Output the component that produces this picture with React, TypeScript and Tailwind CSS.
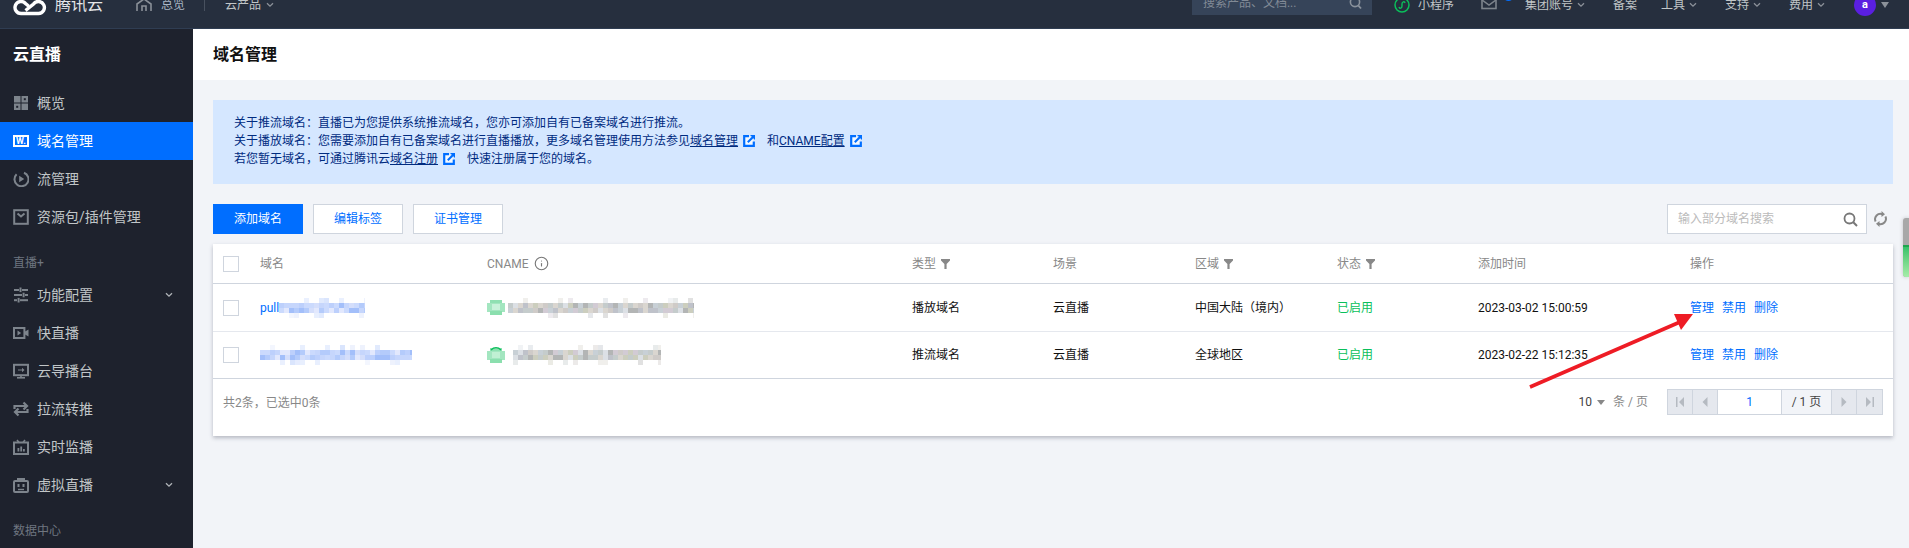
import React from "react";
import { Info } from "lucide-react";

const FONT = "font-['Roboto','Noto_Sans_CJK_SC',sans-serif]";

function rng(seed: number) {
  let s = seed;
  return () => {
    s = (s * 16807) % 2147483647;
    return s / 2147483647;
  };
}

function Mosaic({ w, h, palette, seed, cell = 5 }: { w: number; h: number; palette: string[]; seed: number; cell?: number }) {
  const r = rng(seed);
  const rows = Math.ceil(h / cell);
  const cols = Math.ceil(w / cell);
  const cells: React.ReactNode[] = [];
  for (let y = 0; y < rows; y++) {
    for (let x = 0; x < cols; x++) {
      const edge = y === 0 || y === rows - 1;
      const v = r();
      if (edge && v < 0.78) continue;
      cells.push(
        <rect key={`${x}-${y}`} x={x * cell} y={y * cell} width={cell} height={cell} fill={palette[Math.floor(r() * palette.length)]} opacity={edge ? 0.4 : 1} />
      );
    }
  }
  return (
    <svg width={w} height={h} shapeRendering="crispEdges" className="block shrink-0">
      {cells}
    </svg>
  );
}

const BLUE = ["#c6d6fc", "#bdd0fc", "#d4defb", "#b4cbfb", "#cbdafd", "#e2e8fd", "#a3bffa"];
const GREY = ["#cfcbc8", "#c8d0d6", "#bfc2ca", "#dad6d0", "#c5cccc", "#d2cbd4", "#b3b5b5", "#dce0e5", "#cccebe"];

function GreenDot({ top }: { top?: boolean }) {
  return (
    <svg width="18" height="17" viewBox="0 0 18 17" shapeRendering="crispEdges" className="shrink-0 block">
      <rect x="3" y="1" width="12" height="15" fill="#8fe0b2" />
      <rect x="0" y="4" width="18" height="9" fill="#a3e6c0" />
      <rect x="5" y="5" width="8" height="6" fill={top ? "#c0f0d3" : "#c8f2da"} />
      <rect x="3" y="12" width="12" height="4" fill="#8bdfae" />
      {top && <path d="M4 3 C7 0 11 0 14 3" fill="none" stroke="#0abf5b" strokeWidth="1.4" shapeRendering="auto" />}
    </svg>
  );
}

const ic = "#7d848c";

function Chev({ c = "#8b9199" }: { c?: string }) {
  return (
    <svg width="8" height="6" viewBox="0 0 8 6" className="shrink-0">
      <path d="M1 1.2 L4 4.2 L7 1.2" fill="none" stroke={c} strokeWidth="1.3" />
    </svg>
  );
}

const icons: Record<string, React.ReactNode> = {
  overview: (
    <g fill={ic}>
      <rect x="1" y="1" width="6.5" height="6.5" />
      <rect x="8.5" y="1" width="6.5" height="6.5" />
      <rect x="1" y="8.5" width="6.5" height="6.5" />
      <rect x="8.5" y="8.5" width="6.5" height="6.5" />
      <rect x="10.8" y="3.2" width="2" height="2" fill="#1e222d" />
      <rect x="3.2" y="10.8" width="2" height="2" fill="#1e222d" />
    </g>
  ),
  stream: (
    <g fill="none" stroke={ic} strokeWidth="2">
      <path d="M11 1.7 A7 7 0 1 1 3.6 3.2" />
      <path d="M6.2 4.8 L11.2 8 L6.2 11.2 Z" fill={ic} stroke="none" />
    </g>
  ),
  pack: (
    <g fill="none" stroke={ic} strokeWidth="2">
      <rect x="1.2" y="1.2" width="13.6" height="13.6" />
      <path d="M4.5 4.5 L8 7.5 L11.5 4.5" />
    </g>
  ),
  config: (
    <g fill={ic}>
      <rect x="1" y="2" width="5" height="2" />
      <rect x="9" y="2" width="6" height="2" />
      <rect x="6.5" y="0.5" width="2" height="4.6" />
      <rect x="1" y="7" width="8" height="2" />
      <rect x="12" y="7" width="3" height="2" />
      <rect x="9.6" y="5.7" width="2" height="4.6" />
      <rect x="1" y="12.2" width="3" height="2" />
      <rect x="7" y="12.2" width="8" height="2" />
      <rect x="4.6" y="10.9" width="2" height="4.6" />
    </g>
  ),
  video: (
    <g>
      <rect x="1" y="3" width="10.4" height="10" fill="none" stroke={ic} strokeWidth="2" />
      <path d="M4.5 5.6 L8.2 8 L4.5 10.4 Z" fill={ic} />
      <path d="M12 6.5 L15.5 4.5 V11.5 L12 9.5 Z" fill={ic} />
    </g>
  ),
  screen: (
    <g>
      <rect x="1" y="1.8" width="14" height="10.4" fill="none" stroke={ic} strokeWidth="2" />
      <rect x="4" y="14" width="8" height="1.6" fill={ic} />
      <rect x="7.2" y="12" width="1.6" height="2" fill={ic} />
      <path d="M5 6.4 H9 V4.8 L11.5 7 L9 9.2 V7.6 H5 Z" fill={ic} />
    </g>
  ),
  swap: (
    <g fill="none" stroke={ic} strokeWidth="2.2">
      <path d="M1.5 8 V5 H14" />
      <path d="M10.5 1.5 L14 5 L10.5 8.5" />
      <path d="M14.5 8 V11 H2" />
      <path d="M5.5 7.5 L2 11 L5.5 14.5" />
    </g>
  ),
  monitor: (
    <g>
      <rect x="1" y="3.5" width="14" height="11.5" fill="none" stroke={ic} strokeWidth="2" />
      <path d="M4 1 L6 3.5 M12 1 L10 3.5" stroke={ic} strokeWidth="1.6" />
      <rect x="4.5" y="9" width="1.8" height="3.5" fill={ic} />
      <rect x="7.3" y="7.5" width="1.8" height="5" fill={ic} />
      <rect x="10" y="10" width="1.8" height="2.5" fill={ic} />
    </g>
  ),
  robot: (
    <g>
      <rect x="1" y="4" width="14" height="11" rx="1" fill="none" stroke={ic} strokeWidth="2" />
      <path d="M4 2 H12" stroke={ic} strokeWidth="2" />
      <rect x="4.5" y="7" width="2" height="3" fill={ic} />
      <rect x="9.5" y="7" width="2" height="3" fill={ic} />
      <path d="M5 12.5 H11" stroke={ic} strokeWidth="1.4" />
    </g>
  ),
};

function NavRow({ icon, label, active, chev }: { icon: string; label: string; active?: boolean; chev?: boolean }) {
  return (
    <div className={`flex h-[38px] items-center pl-[13px] pr-5 text-sm ${active ? "bg-[#006eff] text-white" : "text-[#c1c6c8]"}`}>
      {icon === "domain" ? (
        <span className="flex h-[12px] w-[16px] items-center justify-center border-2 border-white text-[9px] font-bold leading-none text-white">W.</span>
      ) : (
        <svg width="16" height="16" viewBox="0 0 16 16" className="shrink-0">
          {icons[icon]}
        </svg>
      )}
      <span className="ml-2 flex-1">{label}</span>
      {chev && <Chev c="#b0b4b8" />}
    </div>
  );
}

function GroupLabel({ text }: { text: string }) {
  return <div className="flex h-10 items-end pb-[5px] pl-[13px] text-xs leading-[16px] text-[#6f7680]">{text}</div>;
}

function Sidebar() {
  return (
    <aside className="w-[193px] shrink-0 bg-[#1e222d]">
      <div className="flex h-[55px] items-center pb-[3px] pl-[13px] text-base font-bold text-white">云直播</div>
      <NavRow icon="overview" label="概览" />
      <NavRow icon="domain" label="域名管理" active />
      <NavRow icon="stream" label="流管理" />
      <NavRow icon="pack" label="资源包/插件管理" />
      <GroupLabel text="直播+" />
      <NavRow icon="config" label="功能配置" chev />
      <NavRow icon="video" label="快直播" />
      <NavRow icon="screen" label="云导播台" />
      <NavRow icon="swap" label="拉流转推" />
      <NavRow icon="monitor" label="实时监播" />
      <NavRow icon="robot" label="虚拟直播" chev />
      <GroupLabel text="数据中心" />
    </aside>
  );
}

function TopBar() {
  return (
    <header className="h-[29px] shrink-0 border-b border-[#2f3d52] bg-[#262f3e] text-xs text-[#c1c6c8]">
      <div className="flex h-[10px] items-center">
        <svg width="34" height="17" viewBox="0 0 34 17" className="ml-[13px] mt-[5px] shrink-0">
          <path d="M8 14.5 H25.5 A6 6 0 1 0 20.5 5 L12.5 11.5 M8 14.5 A6 6 0 1 1 12.5 4.5 L15.5 7" fill="none" stroke="#fff" strokeWidth="3.4" />
        </svg>
        <span className="ml-[8px] text-base leading-none text-[#e4e6e8]">腾讯云</span>
        <svg width="16" height="14" viewBox="0 0 16 14" className="ml-[33px] mt-[2px] shrink-0">
          <path d="M1 12 V5 L8 0 L15 5 V12 M6 12 V7 H10 V12" fill="none" stroke="#8a9098" strokeWidth="1.6" />
        </svg>
        <span className="ml-[9px] text-[#a9b6c4]">总览</span>
        <span className="ml-[19px] h-[12px] w-px bg-[#48515f]" />
        <span className="ml-[20px]">云产品</span>
        <span className="ml-[5px]">
          <Chev />
        </span>

        <div className="ml-auto flex h-[10px] w-[180px] items-center justify-between self-start">
          <div className="flex h-[19px] w-[180px] shrink-0 items-end justify-between bg-[#364459] pb-[4px] pl-[11px] pr-[10px] text-[#818a96]">
            <span className="leading-[16px]">搜索产品、文档...</span>
            <svg width="13" height="15" viewBox="0 0 13 15">
              <circle cx="6" cy="6" r="4.6" fill="none" stroke="#8a929c" strokeWidth="1.6" />
              <path d="M9.4 9.6 L12 12.5" stroke="#8a929c" strokeWidth="1.8" />
            </svg>
          </div>
        </div>
        <svg width="16" height="18" viewBox="0 0 16 18" className="ml-[22px] mt-[2px] shrink-0">
          <circle cx="8" cy="8" r="7" fill="none" stroke="#0abf5b" strokeWidth="1.5" />
          <path d="M5 10 C5.5 12 8 11.5 8 9 V7 C8 4.5 10.5 4 11 6" fill="none" stroke="#0abf5b" strokeWidth="1.4" />
        </svg>
        <span className="ml-[8px]">小程序</span>
        <div className="relative ml-[27px] h-[10px] w-[16px]">
          <svg width="16" height="12" viewBox="0 0 16 12" className="absolute -top-[2px] left-0">
            <rect x="1" y="0" width="14" height="10.5" fill="none" stroke="#7d848c" strokeWidth="1.6" />
            <path d="M1 2 L8 7 L15 2" fill="none" stroke="#7d848c" strokeWidth="1.5" />
          </svg>
          <span className="absolute -top-[5px] left-[22px] h-[6px] w-[11px] rounded-b-full bg-[#006eff]" />
        </div>
        <span className="ml-[28px]">集团账号</span>
        <span className="ml-[4px]">
          <Chev />
        </span>
        <span className="ml-[28px]">备案</span>
        <span className="ml-[24px]">工具</span>
        <span className="ml-[4px]">
          <Chev />
        </span>
        <span className="ml-[28px]">支持</span>
        <span className="ml-[4px]">
          <Chev />
        </span>
        <span className="ml-[28px]">费用</span>
        <span className="ml-[4px]">
          <Chev />
        </span>
        <span className="ml-[29px] flex h-[22px] w-[22px] shrink-0 items-center justify-center rounded-full bg-[#5a1fe0] text-[11px] font-bold text-white">a</span>
        <svg width="8" height="6" viewBox="0 0 8 6" className="ml-[5px] mr-[20px] shrink-0">
          <path d="M0 0 H8 L4 6 Z" fill="#8b9199" />
        </svg>
      </div>
    </header>
  );
}

function Ext() {
  return (
    <svg width="12" height="12" viewBox="0 0 12 12" className="mx-[5px] inline-block align-[-2px]">
      <path d="M6 1.2 H1.2 V10.8 H10.8 V6.5" fill="#f4f9ff" stroke="#006eff" strokeWidth="2.2" />
      <path d="M4.8 7.2 L10 2" stroke="#006eff" strokeWidth="2" />
      <path d="M7 0 H12 V5 Z" fill="#006eff" />
    </svg>
  );
}

function Filter() {
  return (
    <svg width="9" height="10" viewBox="0 0 9 10" className="ml-[5px] shrink-0">
      <path d="M0 0 H9 V1.6 L5.6 5 V10 H3.4 V5 L0 1.6 Z" fill="#888" />
    </svg>
  );
}

const GRID = "grid grid-cols-[47px_227px_425px_141px_142px_142px_141px_212px_1fr] items-center";

function Checkbox() {
  return <span className="ml-[10px] block h-4 w-4 border border-[#cfd5de] bg-white" />;
}

function Actions() {
  return (
    <div className="flex gap-2 text-[#006eff]">
      <span>管理</span>
      <span>禁用</span>
      <span>删除</span>
    </div>
  );
}

function PagerBtn({ d }: { d: "first" | "prev" | "next" | "last" }) {
  return (
    <span className="flex h-full w-[25px] items-center justify-center border-r border-[#cfd5de] bg-[#e5e8ee] last:border-r-0">
      <svg width="8" height="10" viewBox="0 0 8 10">
        {d === "first" && <path d="M0 0 H1.5 V10 H0 Z M8 0 V10 L3 5 Z" fill="#b5bac1" />}
        {d === "prev" && <path d="M6.5 0 V10 L1.5 5 Z" fill="#b5bac1" />}
        {d === "next" && <path d="M1.5 0 V10 L6.5 5 Z" fill="#b5bac1" />}
        {d === "last" && <path d="M8 0 H6.5 V10 H8 Z M0 0 V10 L5 5 Z" fill="#b5bac1" />}
      </svg>
    </span>
  );
}

function Table() {
  return (
    <div className="mt-[10px] bg-white text-xs text-[#111] shadow-[0_2px_4px_rgba(54,58,80,0.32)]">
      <div className={`${GRID} h-[40px] border-b border-[#cfd5de] text-[#888]`}>
        <Checkbox />
        <span>域名</span>
        <span className="flex items-center">
          CNAME
          <Info size={15} strokeWidth={1.8} className="ml-[5px] text-[#777]" />
        </span>
        <span className="flex items-center">
          类型
          <Filter />
        </span>
        <span>场景</span>
        <span className="flex items-center">
          区域
          <Filter />
        </span>
        <span className="flex items-center">
          状态
          <Filter />
        </span>
        <span>添加时间</span>
        <span>操作</span>
      </div>
      <div className={`${GRID} h-[48px] border-b border-[#e5e8ee]`}>
        <Checkbox />
        <span className="flex items-center text-[#006eff]">
          pull
          <Mosaic w={86} h={20} palette={BLUE} seed={77} />
        </span>
        <span className="flex items-center gap-[3px]">
          <GreenDot />
          <Mosaic w={186} h={20} palette={GREY} seed={1234} />
        </span>
        <span>播放域名</span>
        <span>云直播</span>
        <span>中国大陆（境内）</span>
        <span className="text-[#0abf5b]">已启用</span>
        <span>2023-03-02 15:00:59</span>
        <Actions />
      </div>
      <div className={`${GRID} h-[47px] border-b border-[#cfd5de]`}>
        <Checkbox />
        <span className="flex items-center">
          <Mosaic w={152} h={20} palette={BLUE} seed={4321} />
        </span>
        <span className="flex items-center gap-[8px]">
          <GreenDot top />
          <Mosaic w={148} h={20} palette={GREY} seed={987} />
        </span>
        <span>推流域名</span>
        <span>云直播</span>
        <span>全球地区</span>
        <span className="text-[#0abf5b]">已启用</span>
        <span>2023-02-22 15:12:35</span>
        <Actions />
      </div>
      <div className="flex h-[57px] items-start pl-[10px] pr-[10px] pt-[10px]">
        <span className="mt-[1px] flex h-[26px] items-center text-[#888]">共2条，已选中0条</span>
        <div className="ml-auto flex h-[26px] items-center text-[#444]">
          <span>10</span>
          <svg width="8" height="5" viewBox="0 0 8 5" className="ml-[5px]">
            <path d="M0 0 H8 L4 5 Z" fill="#888" />
          </svg>
          <span className="ml-[8px] text-[#888]">条 / 页</span>
        </div>
        <div className="ml-[19px] flex h-[26px] border border-[#cfd5de]">
          <PagerBtn d="first" />
          <PagerBtn d="prev" />
          <span className="flex h-full w-[64px] items-center justify-center border-r border-[#cfd5de] bg-white text-[#006eff]">1</span>
          <span className="flex h-full w-[50px] items-center justify-center border-r border-[#cfd5de] bg-[#f2f4f8] text-[#444]">/ 1 页</span>
          <PagerBtn d="next" />
          <PagerBtn d="last" />
        </div>
      </div>
    </div>
  );
}

export default function App() {
  return (
    <div className={`relative flex h-[548px] w-full flex-col overflow-hidden bg-[#f2f4f8] ${FONT}`}>
      <TopBar />
      <div className="flex min-h-0 flex-1">
        <Sidebar />
        <main className="flex min-w-0 flex-1 flex-col">
          <div className="flex h-[51px] shrink-0 items-center bg-white pl-5 text-base font-bold leading-none text-[#111]">域名管理</div>
          <div className="pl-5 pr-4 pt-5">
            <div className="h-[84px] bg-[#d5e7ff] px-[21px] py-[14px] text-xs leading-[18px] text-[#002b7f]">
              <p>关于推流域名：直播已为您提供系统推流域名，您亦可添加自有已备案域名进行推流。</p>
              <p>
                关于播放域名：您需要添加自有已备案域名进行直播播放，更多域名管理使用方法参见<span className="underline">域名管理</span>
                <Ext />
                <span className="ml-[7px]">和</span>
                <span className="underline">CNAME配置</span>
                <Ext />
              </p>
              <p>
                若您暂无域名，可通过腾讯云<span className="underline">域名注册</span>
                <Ext />
                <span className="ml-[7px]">快速注册属于您的域名。</span>
              </p>
            </div>
            <div className="mt-5 flex h-[30px] items-stretch gap-[10px] text-xs">
              <button className="w-[90px] bg-[#006eff] text-white">添加域名</button>
              <button className="w-[90px] border border-[#cfd5de] bg-white text-[#006eff]">编辑标签</button>
              <button className="w-[90px] border border-[#cfd5de] bg-white text-[#006eff]">证书管理</button>
              <div className="ml-auto flex w-[200px] items-center justify-between border border-[#cfd5de] bg-white pl-[10px] pr-[8px] text-[#bbb]">
                <span>输入部分域名搜索</span>
                <svg width="15" height="15" viewBox="0 0 15 15">
                  <circle cx="6.5" cy="6.5" r="5" fill="none" stroke="#777" strokeWidth="1.8" />
                  <path d="M10.3 10.3 L14 14" stroke="#777" strokeWidth="2" />
                </svg>
              </div>
              <span className="-ml-[3px] flex w-[19px] items-center justify-start">
                <svg width="13" height="16" viewBox="0 0 13 16">
                  <path d="M1.6 10.5 A5.4 5.4 0 0 1 8.5 3.2 M11.4 5.5 A5.4 5.4 0 0 1 4.5 12.8" fill="none" stroke="#888" strokeWidth="2" />
                  <path d="M7.5 0 L11 3.2 L7.5 6 Z M5.5 10 L2 12.8 L5.5 16 Z" fill="#888" />
                </svg>
              </span>
            </div>
            <Table />
          </div>
        </main>
      </div>

      {/* floating side widget */}
      <div className="absolute right-0 top-[218px] h-[59px] w-[6px] overflow-hidden rounded-l-[3px] bg-[#a8a8a8] shadow-[0_0_4px_rgba(0,0,0,0.2)]">
        <div className="mt-[27px] h-[32px] border-t-2 border-[#1fa64e] bg-gradient-to-b from-[#35c26a] to-[#a5eda9]" />
      </div>

      {/* annotation arrow */}
      <svg width="200" height="100" viewBox="0 0 200 100" className="absolute left-[1510px] top-[300px]">
        <path d="M20 87 L170 22" stroke="#ee1c25" strokeWidth="3.6" />
        <path d="M183 14 L164 14 L171 30 Z" fill="#ee1c25" />
      </svg>
    </div>
  );
}
